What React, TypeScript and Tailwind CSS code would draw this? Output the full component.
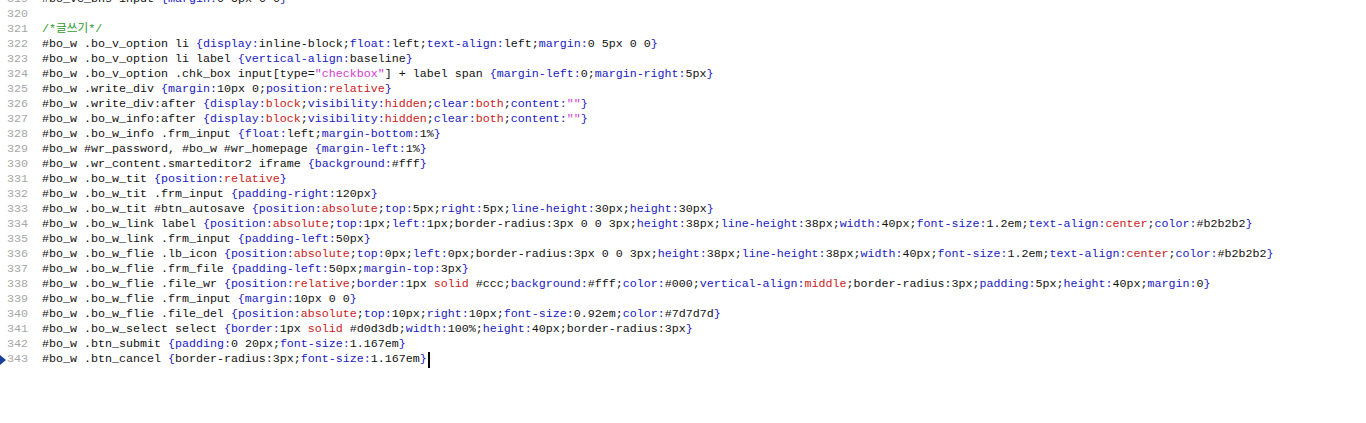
import React from "react";

type Token = { text: string; color: string };

const BLUE = "text-[#2020c0]";
const RED = "text-[#cc1a1a]";
const PINK = "text-[#d63ad0]";
const GREEN = "text-[#2f9a2f]";
const BLACK = "text-[#111111]";

const KEYWORDS = ["relative", "absolute", "block", "hidden", "both", "center", "solid", "middle"];
// properties the editor doesn't know about stay black
const PLAIN_PROPS = ["border-radius"];

const LINES: string[] = [
  "#bo_vc_bns input {margin:0 5px 0 0}",
  "",
  "/*글쓰기*/",
  "#bo_w .bo_v_option li {display:inline-block;float:left;text-align:left;margin:0 5px 0 0}",
  "#bo_w .bo_v_option li label {vertical-align:baseline}",
  '#bo_w .bo_v_option .chk_box input[type="checkbox"] + label span {margin-left:0;margin-right:5px}',
  "#bo_w .write_div {margin:10px 0;position:relative}",
  '#bo_w .write_div:after {display:block;visibility:hidden;clear:both;content:""}',
  '#bo_w .bo_w_info:after {display:block;visibility:hidden;clear:both;content:""}',
  "#bo_w .bo_w_info .frm_input {float:left;margin-bottom:1%}",
  "#bo_w #wr_password, #bo_w #wr_homepage {margin-left:1%}",
  "#bo_w .wr_content.smarteditor2 iframe {background:#fff}",
  "#bo_w .bo_w_tit {position:relative}",
  "#bo_w .bo_w_tit .frm_input {padding-right:120px}",
  "#bo_w .bo_w_tit #btn_autosave {position:absolute;top:5px;right:5px;line-height:30px;height:30px}",
  "#bo_w .bo_w_link label {position:absolute;top:1px;left:1px;border-radius:3px 0 0 3px;height:38px;line-height:38px;width:40px;font-size:1.2em;text-align:center;color:#b2b2b2}",
  "#bo_w .bo_w_link .frm_input {padding-left:50px}",
  "#bo_w .bo_w_flie .lb_icon {position:absolute;top:0px;left:0px;border-radius:3px 0 0 3px;height:38px;line-height:38px;width:40px;font-size:1.2em;text-align:center;color:#b2b2b2}",
  "#bo_w .bo_w_flie .frm_file {padding-left:50px;margin-top:3px}",
  "#bo_w .bo_w_flie .file_wr {position:relative;border:1px solid #ccc;background:#fff;color:#000;vertical-align:middle;border-radius:3px;padding:5px;height:40px;margin:0}",
  "#bo_w .bo_w_flie .frm_input {margin:10px 0 0}",
  "#bo_w .bo_w_flie .file_del {position:absolute;top:10px;right:10px;font-size:0.92em;color:#7d7d7d}",
  "#bo_w .bo_w_select select {border:1px solid #d0d3db;width:100%;height:40px;border-radius:3px}",
  "#bo_w .btn_submit {padding:0 20px;font-size:1.167em}",
  "#bo_w .btn_cancel {border-radius:3px;font-size:1.167em}",
];

const FIRST_LINE = 319;
const CURSOR_LINE = 343;

function splitStrings(text: string, base: string): Token[] {
  return text
    .split(/("[^"]*")/)
    .filter((p) => p !== "")
    .map((p) => ({ text: p, color: p.startsWith('"') ? PINK : base }));
}

function tokenize(line: string): Token[] {
  if (line.startsWith("/*")) return [{ text: line, color: GREEN }];
  const open = line.indexOf("{");
  if (open < 0) return splitStrings(line, BLACK);

  const tokens: Token[] = [...splitStrings(line.slice(0, open), BLACK), { text: "{", color: BLUE }];
  let body = line.slice(open + 1);
  const closed = body.endsWith("}");
  if (closed) body = body.slice(0, -1);

  const decls = body.split(";");
  decls.forEach((decl, i) => {
    const colon = decl.indexOf(":");
    const prop = decl.slice(0, colon);
    const value = decl.slice(colon + 1);
    tokens.push({ text: prop + ":", color: PLAIN_PROPS.includes(prop) ? BLACK : BLUE });
    value
      .split(/("[^"]*"|\s+)/)
      .filter((p) => p !== "")
      .forEach((p) => {
        let color = BLACK;
        if (p.startsWith('"')) color = PINK;
        else if (KEYWORDS.includes(p)) color = RED;
        tokens.push({ text: p, color });
      });
    if (i < decls.length - 1) tokens.push({ text: ";", color: BLACK });
  });
  if (closed) tokens.push({ text: "}", color: BLUE });
  return tokens;
}

const CodeLine = ({ num, text }: { num: number; text: string }) => {
  const isCursor = num === CURSOR_LINE;
  return (
    <div className="flex h-[15px] items-center leading-[15px] whitespace-pre">
      <div className="flex w-[7px] shrink-0 items-center">
        {isCursor && (
          <span className="block h-0 w-0 border-y-[5px] border-l-[6px] border-y-transparent border-l-[#1b3f9c]" />
        )}
      </div>
      <span className="w-[21px] shrink-0 text-right text-[#a6a6a6]">{num}</span>
      <div className="ml-[14px] flex items-center">
        {tokenize(text).map((t, i) => (
          <span key={i} className={t.color}>
            {t.text}
          </span>
        ))}
        {isCursor && <span className="ml-[1px] inline-block h-[16px] w-[2px] bg-black" />}
      </div>
    </div>
  );
};

export default function App() {
  return (
    <div className="h-[423px] w-full overflow-hidden bg-white font-['Liberation_Mono','Noto_Sans_CJK_KR',monospace] text-[11.67px]">
      <div className="-mt-[8px] flex flex-col">
        {LINES.map((line, i) => (
          <CodeLine key={i} num={FIRST_LINE + i} text={line} />
        ))}
      </div>
    </div>
  );
}
